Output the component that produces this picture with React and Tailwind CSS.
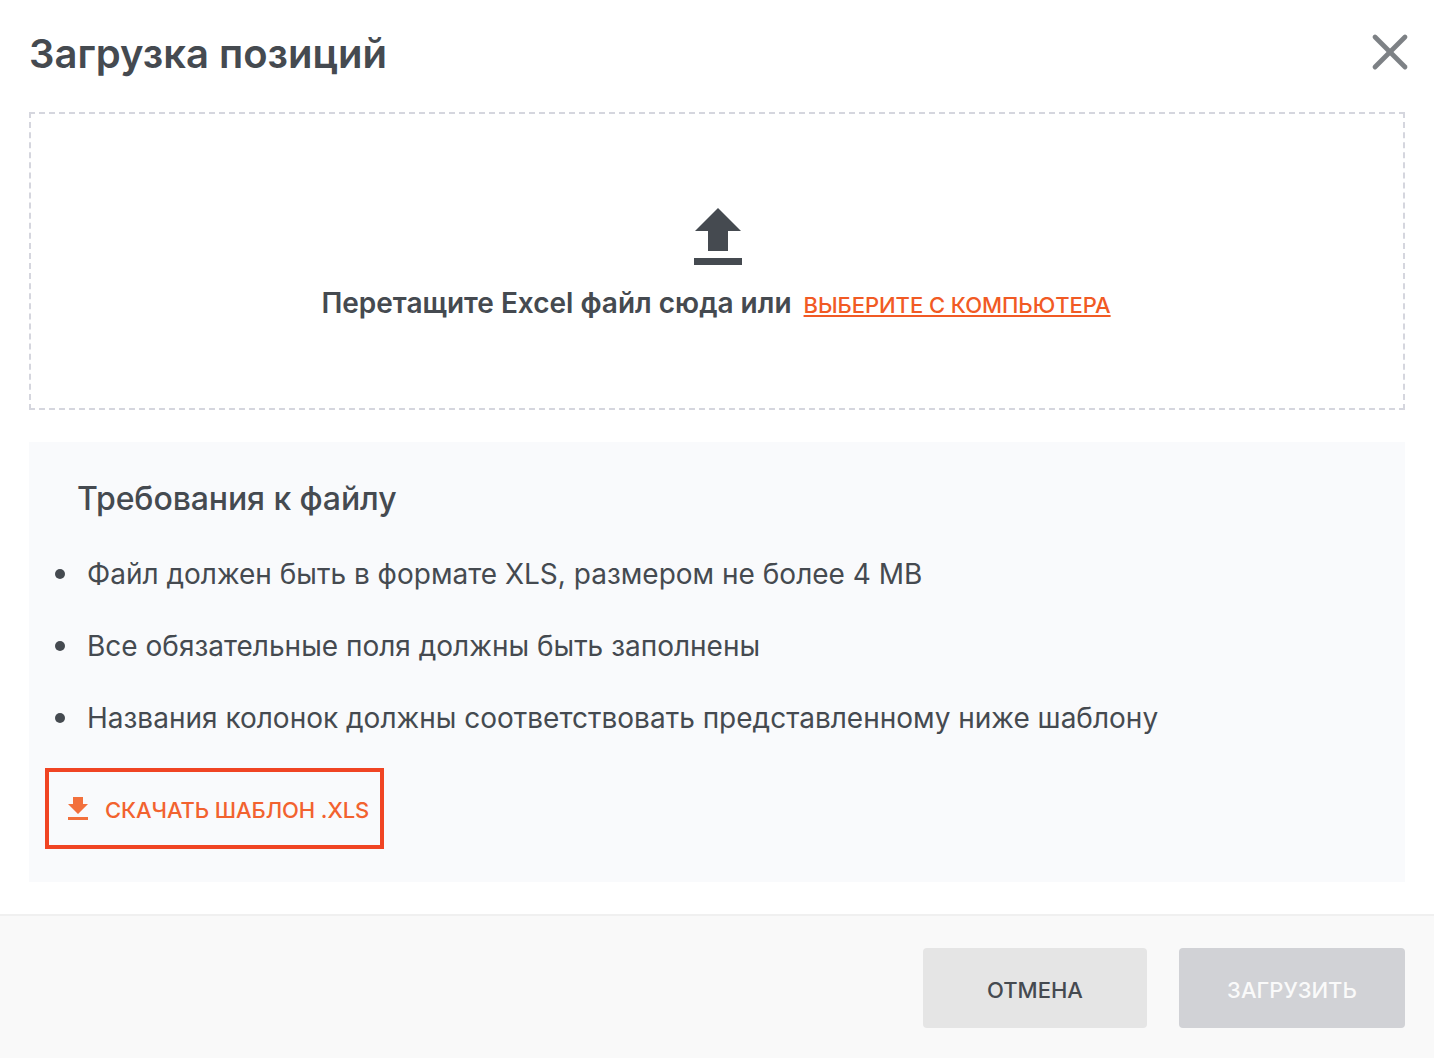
import { X } from "lucide-react"

const requirements = [
  "Файл должен быть в формате XLS, размером не более 4 MB",
  "Все обязательные поля должны быть заполнены",
  "Названия колонок должны соответствовать представленному ниже шаблону",
]

export default function App() {
  return (
    <div className="w-[1434px] h-[1058px] bg-white flex flex-col font-['Inter',sans-serif] text-[#454a50] overflow-hidden">
      <div className="flex-1 px-[29px]">
        <div className="h-[112px] flex items-center justify-between">
          <h1 className="text-[40px] leading-[48px] font-semibold -mt-[4px]">Загрузка позиций</h1>
          <button className="text-[#7d8185] -mr-[15px] -mt-[8px]">
            <X className="w-[60px] h-[60px]" strokeWidth={1.9} />
          </button>
        </div>

        <div className="h-[298px] border-2 border-dashed border-[#d5d6de] flex flex-col items-center pt-[92px]">
          <svg width="48" height="59" viewBox="0 0 48 59" className="ml-[1px]">
            <path d="M24 2 47 25H34V45H14V25H1Z M0 52H48V59H0Z" fill="#454a50" />
          </svg>
          <div className="flex items-baseline mt-[20px] mr-[2px]">
            <span className="text-[28px] leading-[36px] font-semibold">Перетащите Excel файл сюда или</span>
            <a className="ml-[12px] text-[22px] leading-[36px] font-medium text-[#f15a24] underline underline-offset-2 tracking-[-0.05px]">ВЫБЕРИТЕ С КОМПЬЮТЕРА</a>
          </div>
        </div>

        <div className="h-[440px] mt-[32px] bg-[#f9fafc] pt-[36px] pl-[16px]">
          <h2 className="ml-[32px] text-[32px] leading-[42px] font-medium tracking-[-0.1px]">Требования к файлу</h2>
          <ul className="mt-[36px] flex flex-col gap-[36px]">
            {requirements.map((item) => (
              <li key={item} className="flex items-center text-[28px] leading-[36px]">
                <span className="w-[10px] h-[10px] rounded-full bg-[#454a50] ml-[10px] mr-[22px]" />
                {item}
              </li>
            ))}
          </ul>
          <div className="mt-[32px] w-[339px] h-[81px] border-4 border-[#f04423] flex items-center pl-[17px] text-[#f2622f]">
            <svg width="24" height="24" viewBox="0 0 24 24" className="shrink-0 -mt-[2px]">
              <path d="M7 1H17V8H22L12 18 2 8H7Z M2 21H22V24H2Z" fill="#f2703c" />
            </svg>
            <span className="ml-[15px] mt-[2px] text-[22px] leading-[32px] font-medium whitespace-nowrap tracking-[-0.1px]">СКАЧАТЬ ШАБЛОН .XLS</span>
          </div>
        </div>
      </div>

      <div className="h-[144px] bg-[#f9f9f9] border-t-2 border-[#f0f0f0] flex justify-end items-center gap-[32px] pr-[29px] pt-[2px]">
        <button className="w-[224px] h-[80px] rounded-[4px] bg-[#e5e5e5] text-[22px] font-medium pt-[4px]">ОТМЕНА</button>
        <button className="w-[226px] h-[80px] rounded-[4px] bg-[#d1d2d6] text-[22px] font-medium text-[#fafafa] pt-[4px]">ЗАГРУЗИТЬ</button>
      </div>
    </div>
  )
}
